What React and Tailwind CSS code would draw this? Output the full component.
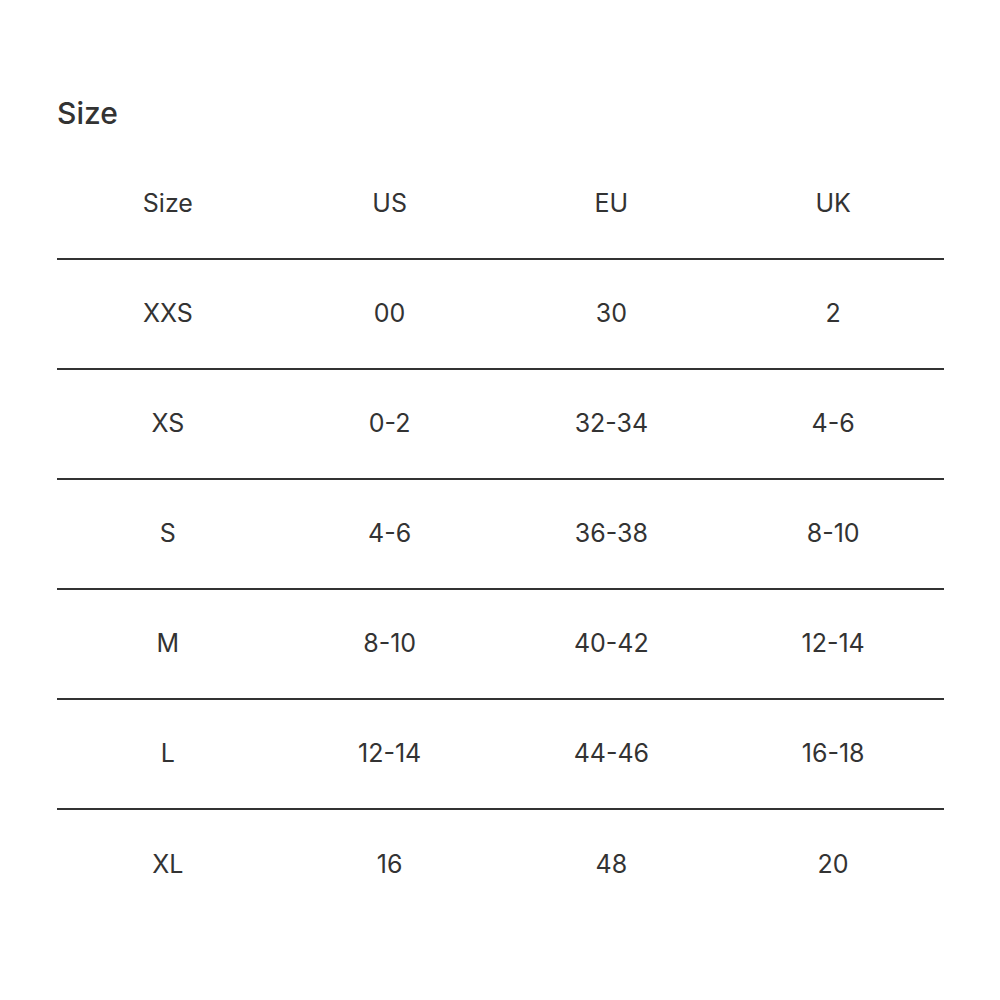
import React from 'react';

const rows = [
  ['XXS', '00', '30', '2'],
  ['XS', '0-2', '32-34', '4-6'],
  ['S', '4-6', '36-38', '8-10'],
  ['M', '8-10', '40-42', '12-14'],
  ['L', '12-14', '44-46', '16-18'],
  ['XL', '16', '48', '20'],
];

function Row({ cells, last }) {
  return (
    <div
      className={`grid grid-cols-4 h-[110px] items-center ${last ? '' : 'border-b-2 border-[#333333]'}`}
    >
      {cells.map((c, i) => (
        <div key={i} className="text-center text-[25px] text-[#333333]">
          {c}
        </div>
      ))}
    </div>
  );
}

export default function App() {
  return (
    <div className="w-[1000px] h-[1000px] bg-white pl-[57px] pr-[56px] pt-[95px]" style={{ fontFamily: 'Inter, "Noto Sans", sans-serif' }}>
      <h1 className="text-[30px] leading-[36px] font-medium text-[#333333]">Size</h1>
      <div className="mt-[19px]">
        <Row cells={['Size', 'US', 'EU', 'UK']} />
        {rows.map((r, i) => (
          <Row key={r[0]} cells={r} last={i === rows.length - 1} />
        ))}
      </div>
    </div>
  );
}
